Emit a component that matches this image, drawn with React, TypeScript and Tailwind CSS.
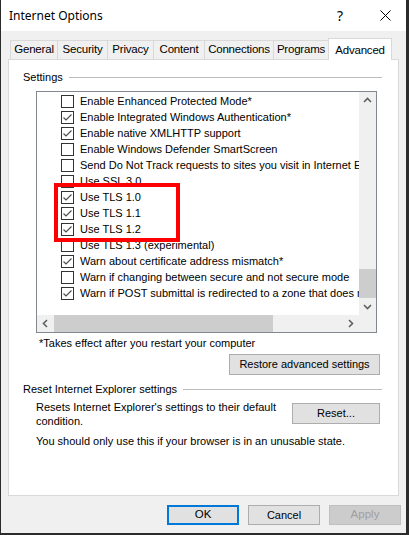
type Row = { checked: boolean; label: string }

const rows: Row[] = [
  { checked: false, label: 'Enable Enhanced Protected Mode*' },
  { checked: true, label: 'Enable Integrated Windows Authentication*' },
  { checked: true, label: 'Enable native XMLHTTP support' },
  { checked: false, label: 'Enable Windows Defender SmartScreen' },
  { checked: false, label: 'Send Do Not Track requests to sites you visit in Internet Explorer' },
  { checked: false, label: 'Use SSL 3.0' },
  { checked: true, label: 'Use TLS 1.0' },
  { checked: true, label: 'Use TLS 1.1' },
  { checked: true, label: 'Use TLS 1.2' },
  { checked: false, label: 'Use TLS 1.3 (experimental)' },
  { checked: true, label: 'Warn about certificate address mismatch*' },
  { checked: false, label: 'Warn if changing between secure and not secure mode' },
  { checked: true, label: 'Warn if POST submittal is redirected to a zone that does not permit posts' },
]

const tabs = [
  { name: 'General', w: 'w-[48px]' },
  { name: 'Security', w: 'w-[51px]' },
  { name: 'Privacy', w: 'w-[47px]' },
  { name: 'Content', w: 'w-[52px]' },
  { name: 'Connections', w: 'w-[70px]' },
  { name: 'Programs', w: 'w-[56px]' },
]

function CheckBox({ checked }: { checked: boolean }) {
  return (
    <div className="w-[13px] h-[13px] border border-[#333333] bg-white flex-none flex items-center justify-center">
      {checked && (
        <svg width="11" height="11" viewBox="0 0 11 11">
          <polyline points="1.5,5.5 4,8 9.5,2.5" fill="none" stroke="#4a4a4a" strokeWidth="1.1" />
        </svg>
      )}
    </div>
  )
}

function Chevron({ dir }: { dir: 'up' | 'down' | 'left' | 'right' }) {
  const pts = {
    up: '1,6 4.5,2.5 8,6',
    down: '1,3 4.5,6.5 8,3',
    left: '6,1 2.5,4.5 6,8',
    right: '3,1 6.5,4.5 3,8',
  }[dir]
  return (
    <svg width="9" height="9" viewBox="0 0 9 9">
      <polyline points={pts} fill="none" stroke="#606060" strokeWidth="1.6" />
    </svg>
  )
}

function GroupLabel({ text }: { text: string }) {
  return (
    <div className="flex items-center pl-[14px] pr-[16px] h-[14px]">
      <span className="text-[11px] text-black whitespace-nowrap">{text}</span>
      <div className="flex-1 h-px bg-[#bcbcbc] ml-[6px]" />
    </div>
  )
}

function WinButton({ children, className }: { children: React.ReactNode; className: string }) {
  return (
    <button className={`h-[21px] bg-[#e1e1e1] border border-[#adadad] text-[11px] text-black flex items-center justify-center ${className}`}>
      {children}
    </button>
  )
}

export default function App() {
  return (
    <div
      className="w-[409px] h-[535px] bg-[#2b2b2b] pl-px overflow-hidden"
      style={{ fontFamily: '"Liberation Sans", Arial, sans-serif' }}
    >
      <div className="w-[405px] h-[533px] bg-[#f0f0f0] flex flex-col">
        {/* title bar */}
        <div className="h-[31px] bg-white flex items-center flex-none">
          <span className="pl-[8px] text-[12px] text-black" style={{ fontFamily: '"Noto Sans", sans-serif' }}>
            Internet Options
          </span>
          <span
            className="ml-auto mr-[37px] text-[14px] text-black leading-none"
            style={{ fontFamily: '"Noto Sans", sans-serif' }}
          >
            ?
          </span>
          <svg width="11" height="11" viewBox="0 0 11 11" className="mr-[15px]">
            <path d="M0.5 0.5 L10.5 10.5 M10.5 0.5 L0.5 10.5" stroke="#000" strokeWidth="1" />
          </svg>
        </div>

        {/* tabs */}
        <div className="flex items-end h-[21px] mt-[7px] pl-[9px] flex-none relative z-10">
          {tabs.map(t => (
            <div
              key={t.name}
              className={`${t.w} h-[19px] -ml-px first:ml-0 bg-[#f0f0f0] border border-[#d9d9d9] border-b-0 flex items-center justify-center text-[11.5px] text-black tracking-[-0.2px]`}
            >
              {t.name}
            </div>
          ))}
          <div className="w-[64px] h-[22px] -mb-px -ml-px bg-white border border-[#d9d9d9] border-b-0 flex items-start justify-center pt-[3px] text-[11.5px] text-black tracking-[-0.2px]">
            Advanced
          </div>
        </div>

        {/* panel */}
        <div className="mx-[7px] h-[437px] bg-white border border-[#d9d9d9] flex-none flex flex-col pt-[10px]">
          <GroupLabel text="Settings" />

          <div className="ml-[27px] mt-[7px] w-[341px] h-[242px] border border-[#828790] flex flex-col relative">
            <div className="flex h-[223px]">
              <div className="w-[322px] overflow-hidden pt-px">
                {rows.map(r => (
                  <div key={r.label} className="h-[16px] flex items-center pl-[24px] gap-[6px] whitespace-nowrap">
                    <CheckBox checked={r.checked} />
                    <span className="text-[11px] text-black">{r.label}</span>
                  </div>
                ))}
              </div>
              <div className="w-[17px] bg-[#f0f0f0] flex flex-col items-center">
                <div className="h-[17px] flex items-center justify-center">
                  <Chevron dir="up" />
                </div>
                <div className="flex-1 w-full flex flex-col justify-end pb-[17px]">
                  <div className="h-[29px] w-full bg-[#cdcdcd]" />
                </div>
                <div className="h-[17px] flex items-center justify-center -mt-[17px]">
                  <Chevron dir="down" />
                </div>
              </div>
            </div>
            <div className="flex h-[17px] bg-[#f0f0f0]">
              <div className="w-[17px] flex items-center justify-center">
                <Chevron dir="left" />
              </div>
              <div className="w-[288px] flex items-stretch">
                <div className="w-[219px] bg-[#cdcdcd]" />
              </div>
              <div className="w-[17px] flex items-center justify-center">
                <Chevron dir="right" />
              </div>
              <div className="w-[17px]" />
            </div>
            {/* highlight */}
            <div className="absolute left-[17px] top-[91px] w-[126px] h-[59px] border-[4px] border-[#ff0000]" />
          </div>

          <div className="pl-[30px] mt-[4px] text-[11px] text-black h-[13px] leading-[13px]">
            *Takes effect after you restart your computer
          </div>
          <div className="flex justify-end pr-[18px] mt-[4px]">
            <WinButton className="w-[151px]">Restore advanced settings</WinButton>
          </div>

          <div className="mt-[7px]">
            <GroupLabel text="Reset Internet Explorer settings" />
          </div>

          <div className="flex mt-[4px] pl-[27px] pr-[18px]">
            <div className="flex-1 text-[11px] text-black leading-[14px]">
              Resets Internet Explorer's settings to their default
              <br />
              condition.
            </div>
            <WinButton className="w-[88px] mt-[3px]">Reset...</WinButton>
          </div>
          <div className="pl-[27px] mt-[6px] text-[11px] text-black leading-[14px]">
            You should only use this if your browser is in an unusable state.
          </div>
        </div>

        {/* footer */}
        <div className="flex justify-end gap-[9px] pr-[5px] mt-[9px]">
          <button className="w-[72px] h-[20px] bg-[#e1e1e1] border-2 border-[#0078d7] text-[11.5px] text-black flex items-center justify-center">
            OK
          </button>
          <WinButton className="w-[72px] !h-[20px] text-[11.5px]">Cancel</WinButton>
          <button className="w-[72px] h-[20px] bg-[#cccccc] border border-[#bfbfbf] text-[11.5px] text-[#a0a0a0] flex items-center justify-center">
            Apply
          </button>
        </div>
      </div>
    </div>
  )
}
